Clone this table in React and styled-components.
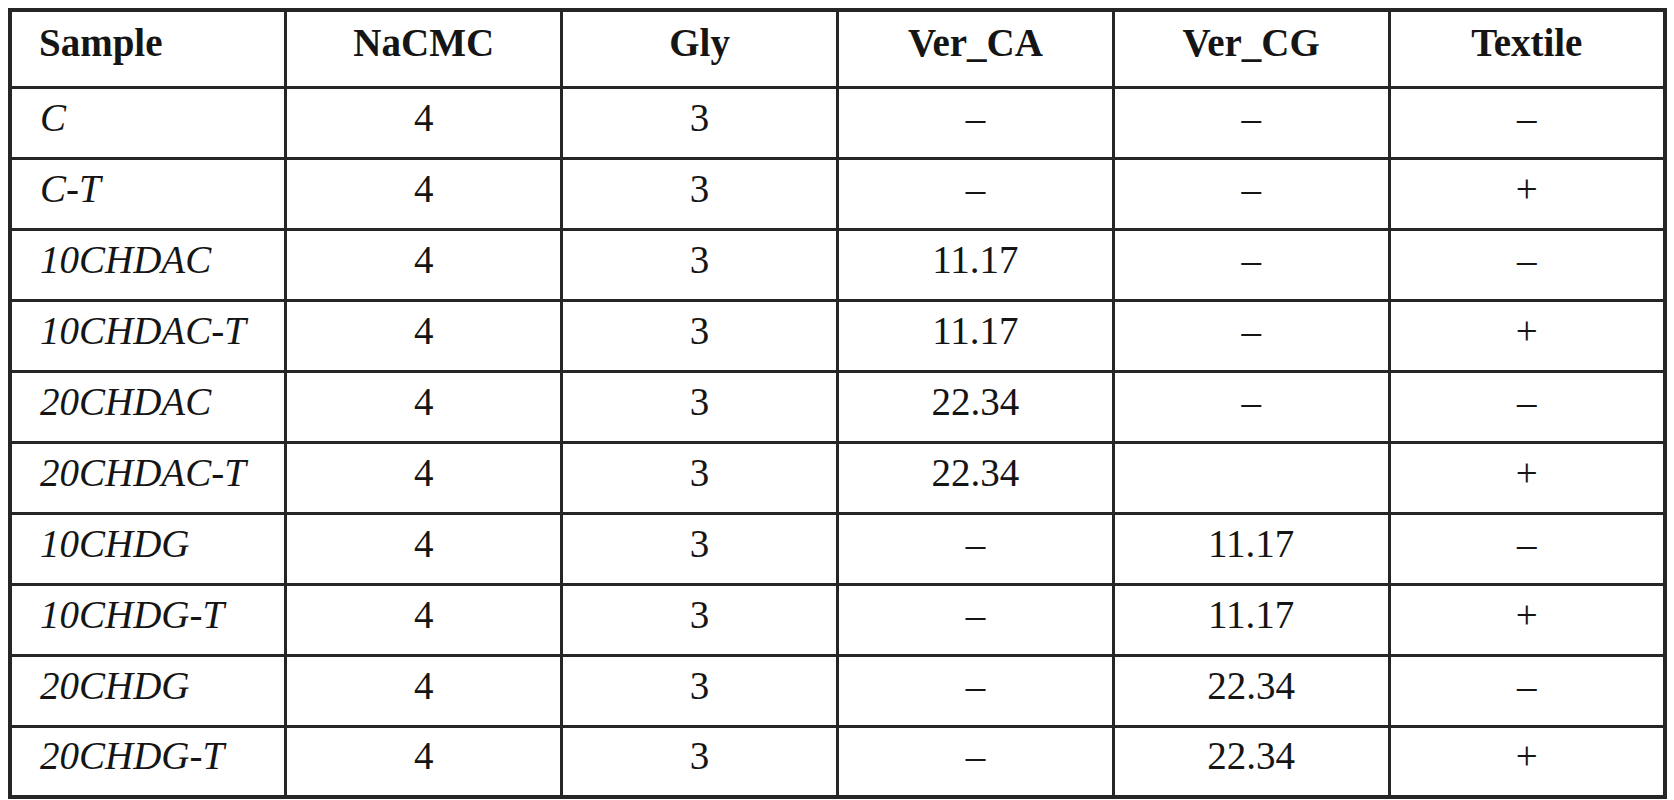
import React from "react";
import styled, { createGlobalStyle } from "styled-components";

const Global = createGlobalStyle`
  html, body { margin: 0; padding: 0; background: #ffffff; }
  body { padding: 8px; font-family: "Liberation Serif", "Times New Roman", serif; }
`;

const Table = styled.table`
  border-collapse: collapse;
  width: 1659px;
  table-layout: fixed;
  border: 4px solid #262626;
  color: #151515;
  font-family: "Liberation Serif", "Times New Roman", serif;
  font-size: 39px;
`;

const HeadRow = styled.tr`
  height: 77px;
`;

const BodyRow = styled.tr`
  height: 71px;
`;

const HeadCell = styled.th`
  border: 3px solid #262626;
  font-weight: 700;
  text-align: ${(p) => (p.$left ? "left" : "center")};
  padding: 0 0 12px ${(p) => (p.$left ? "27px" : "0")};
  vertical-align: middle;
  line-height: 1;
`;

const Cell = styled.td`
  border: 3px solid #262626;
  font-style: ${(p) => (p.$italic ? "italic" : "normal")};
  text-align: ${(p) => (p.$left ? "left" : "center")};
  padding: 0 0 11px ${(p) => (p.$left ? "28px" : "0")};
  vertical-align: middle;
  line-height: 1;
`;

const headers = ["Sample", "NaCMC", "Gly", "Ver_CA", "Ver_CG", "Textile"];

const D = "\u2013";

const rows = [
  ["C", "4", "3", D, D, D],
  ["C-T", "4", "3", D, D, "+"],
  ["10CHDAC", "4", "3", "11.17", D, D],
  ["10CHDAC-T", "4", "3", "11.17", D, "+"],
  ["20CHDAC", "4", "3", "22.34", D, D],
  ["20CHDAC-T", "4", "3", "22.34", "", "+"],
  ["10CHDG", "4", "3", D, "11.17", D],
  ["10CHDG-T", "4", "3", D, "11.17", "+"],
  ["20CHDG", "4", "3", D, "22.34", D],
  ["20CHDG-T", "4", "3", D, "22.34", "+"],
];

export default function App() {
  return (
    <>
      <Global />
      <Table>
        <thead>
          <HeadRow>
            {headers.map((h, i) => (
              <HeadCell key={h} $left={i === 0}>
                {h}
              </HeadCell>
            ))}
          </HeadRow>
        </thead>
        <tbody>
          {rows.map((r) => (
            <BodyRow key={r[0]}>
              {r.map((v, i) => (
                <Cell key={i} $left={i === 0} $italic={i === 0}>
                  {v}
                </Cell>
              ))}
            </BodyRow>
          ))}
        </tbody>
      </Table>
    </>
  );
}
